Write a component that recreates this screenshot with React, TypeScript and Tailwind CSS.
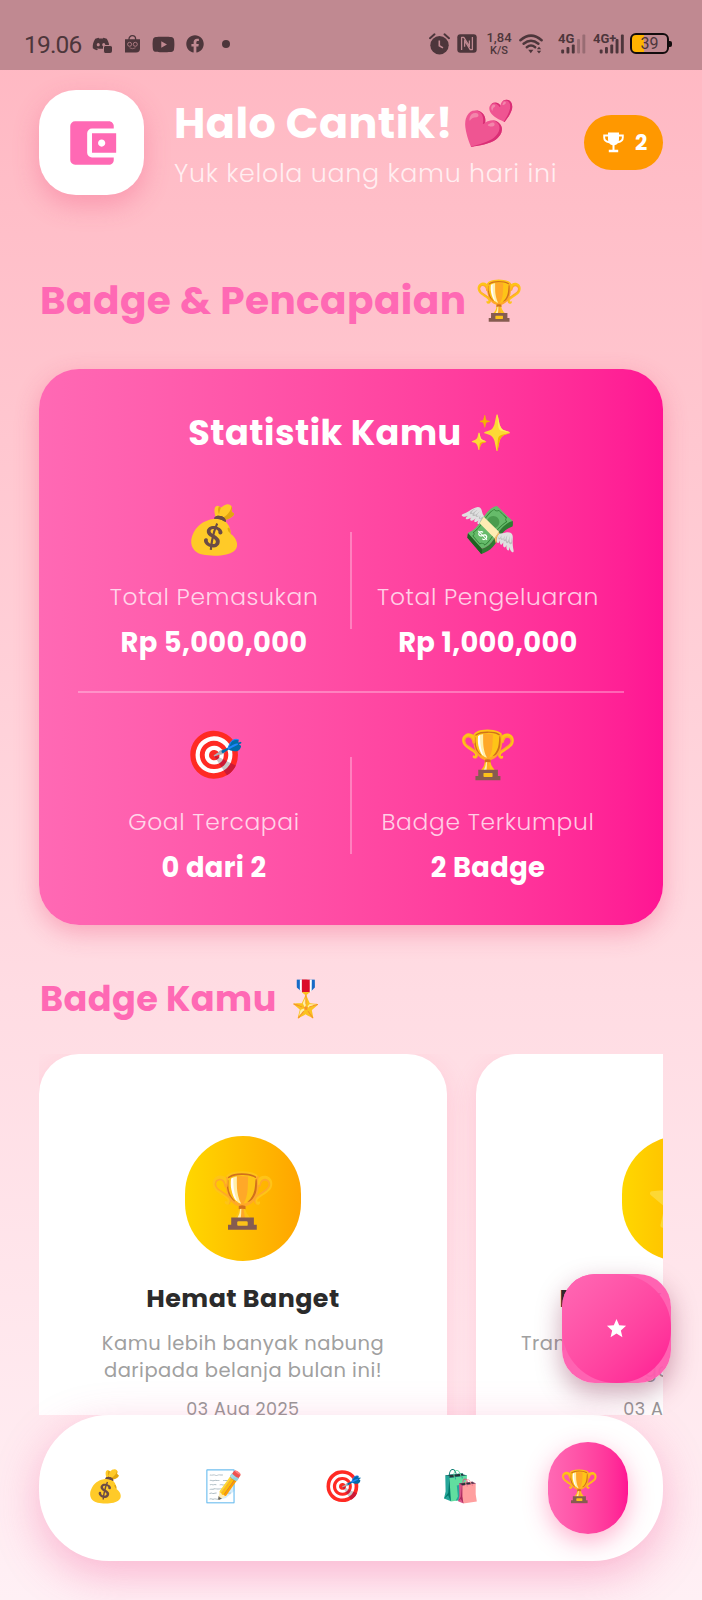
import { FaDiscord, FaFacebook, FaYoutube } from "react-icons/fa";
import { MdAccountBalanceWallet, MdStar } from "react-icons/md";

const INK = "#4d363b";

function ShoppingBagIcon() {
  return (
    <svg width="17" height="18" viewBox="0 0 17 18">
      <path d="M5 5V4a3.3 3.3 0 0 1 6.600 0V5" fill="none" stroke={INK} strokeWidth="1.300" />
      <path d="M1 4.300h15v9.200q0 4-4 4H1z" fill={INK} />
      <circle cx="5.600" cy="9.300" r="2" fill="none" stroke="#c08991" strokeWidth="0.800" />
      <circle cx="11.300" cy="9.300" r="2" fill="none" stroke="#c08991" strokeWidth="0.800" />
      <path d="M5.500 12.800q3 1.800 6 0" fill="none" stroke="#c08991" strokeWidth="0.600" />
    </svg>
  );
}

function DiscordIcon() {
  return (
    <span className="relative block h-[18px] w-[20px]">
      <FaDiscord size={18} color={INK} />
      <span className="absolute right-0 bottom-0 h-[8px] w-[9px] rounded-[2px] border-t border-l border-[#c08991] bg-[#4d363b]" />
    </span>
  );
}

function AlarmIcon() {
  return (
    <svg width="21" height="22" viewBox="0 0 21 22">
      <circle cx="10.500" cy="12.300" r="9.200" fill={INK} />
      <path d="M1 5.200 5.500 1.300M20 5.200 15.500 1.300" stroke={INK} strokeWidth="2" strokeLinecap="round" />
      <path d="M10.300 7.500v5.200l3.700 2.200" fill="none" stroke="#c08991" strokeWidth="1.600" />
    </svg>
  );
}

function NfcIcon() {
  return (
    <svg width="20" height="19" viewBox="0 0 20 19">
      <rect x="0.300" y="0.300" width="19.400" height="18.400" rx="3" fill={INK} />
      <path d="M4.600 16V3.400h2.200l5.600 9V6.500" fill="none" stroke="#c08991" strokeWidth="1.300" strokeLinejoin="round" />
      <path d="M15.400 3v12.600h-2.200L7.600 6.600v6.200" fill="none" stroke="#c08991" strokeWidth="1.300" strokeLinejoin="round" />
    </svg>
  );
}

function WifiIcon() {
  return (
    <svg width="25" height="20" viewBox="0 0 25 20">
      <g fill="none" stroke={INK} strokeWidth="2.500" strokeLinecap="round">
        <path d="M1.400 6.200Q12 -3 22.600 6.200" />
        <path d="M4.600 9.800Q12 3.600 19.400 9.800" />
        <path d="M7.800 13.200Q12 9.800 16.200 13.200" />
      </g>
      <path d="M9.200 15.800h5.200l-2.600 3.400zM17.800 15.300l2.200-2.600 2.200 2.600zM17.800 16.800l2.200 2.600 2.200-2.600z" fill={INK} />
    </svg>
  );
}

function SignalIcon({ label, bars, width, start }: { label: string; bars: number; width: number; start: number }) {
  const tops = [15.5, 13, 10.5, 5, 0.5];
  return (
    <svg width={width} height="24" viewBox={`0 -4 ${width} 24`} className="-mt-[4px] block">
      <text x="0" y="9.300" fontSize="13" fontWeight="700" fontFamily="Roboto, sans-serif" fill={INK}>
        {label}
      </text>
      {tops.map((top, i) => (
        <rect key={top} x={start + i * 5.3} y={top} width="2.900" height={19.5 - top} rx="1" fill={INK} opacity={i < bars ? 1 : 0.35} />
      ))}
    </svg>
  );
}

function StatusBar() {
  return (
    <div className="flex h-[70px] items-start bg-[#c08991] pt-[33px] pl-[24px] font-[Roboto,sans-serif] text-[#4d363b]">
      <div className="flex h-[22px] items-center">
        <span className="w-[67px] pt-[1px] text-[24.5px] leading-[22px] tracking-[-0.8px]">19.06</span>
        <span className="ml-[1px]">
          <DiscordIcon />
        </span>
        <span className="ml-[12px]">
          <ShoppingBagIcon />
        </span>
        <FaYoutube size={23} color={INK} className="ml-[11px]" />
        <FaFacebook size={18} color={INK} className="ml-[11px]" />
        <span className="ml-[18px] size-[8px] rounded-full bg-[#4d363b]" />
      </div>
      <div className="mr-[30px] ml-auto flex h-[21px] items-center">
        <AlarmIcon />
        <span className="ml-[7px]">
          <NfcIcon />
        </span>
        <span className="ml-[7px] flex w-[30px] flex-col items-center font-medium">
          <span className="text-[13px] leading-[14px]">1,84</span>
          <span className="text-[11px] leading-[12px]">K/S</span>
        </span>
        <span className="ml-[5px]">
          <WifiIcon />
        </span>
        <span className="ml-[14px]">
          <SignalIcon label="4G" bars={3} width={28} start={3.2} />
        </span>
        <span className="ml-[7px]">
          <SignalIcon label="4G+" bars={5} width={32} start={6.7} />
        </span>
        <span className="ml-[5px] flex items-center">
          <span className="flex h-[21px] w-[39px] items-center justify-center rounded-[6px] border-2 border-[#120c0d] bg-linear-to-r from-[#ffb400] from-35% to-transparent to-35% text-[16px] leading-none">
            39
          </span>
          <span className="h-[6px] w-[3px] rounded-r-[2px] bg-[#120c0d]" />
        </span>
      </div>
    </div>
  );
}

function TrophyGlyph() {
  return (
    <svg width="21" height="21" viewBox="0 0 21 21" fill="none">
      <path d="M5 0.500h11v6.800q0 4.800-4.500 6v4.400h3.700v2.500H5.800v-2.500h3.700v-4.400Q5 12.100 5 7.300z" fill="#fff" />
      <path d="M5.500 3.500H1.200V5.500q0 4 5 4.700M15.500 3.500h4.300V5.500q0 4-5 4.700" stroke="#fff" strokeWidth="1.900" />
    </svg>
  );
}

function Header() {
  return (
    <header className="flex h-[105px] items-center">
      <div className="flex size-[105px] shrink-0 items-center justify-center rounded-[37px] bg-white shadow-[0_10px_26px_rgba(240,70,120,0.32)]">
        <MdAccountBalanceWallet size={58} color="#ff69b4" />
      </div>
      <div className="ml-[30px] flex-1 pt-[2px] whitespace-nowrap">
        <h1 className="text-[42.9px] leading-[56px] font-bold tracking-[0.45px] text-white">Halo Cantik! 💕</h1>
        <p className="pt-[3px] pb-[1px] text-[25.35px] leading-[38px] font-light tracking-[0.68px] text-white/75">
          Yuk kelola uang kamu hari ini
        </p>
      </div>
      <div className="flex h-[55px] w-[79px] items-center gap-[11px] rounded-full bg-[#ff9800] pl-[19px]">
        <TrophyGlyph />
        <span className="text-[21.5px] leading-[30px] font-bold text-white">2</span>
      </div>
    </header>
  );
}

function Stat({ emoji, label, value }: { emoji: string; label: string; value: string }) {
  return (
    <div className="flex flex-1 flex-col items-center whitespace-nowrap">
      <span className="pl-[1px] text-[46.8px] leading-[62px]">{emoji}</span>
      <span className="mt-[18px] text-[23.4px] leading-[36px] font-light tracking-[0.64px] text-white/75">{label}</span>
      <span className="mt-[10px] text-[27.3px] leading-[36px] font-bold tracking-[0.4px] text-white">{value}</span>
    </div>
  );
}

function StatsCard() {
  return (
    <section className="mt-[42px] h-[556px] rounded-[40px] bg-linear-to-r from-[#ff69b4] to-[#ff1493] px-[39px] pt-[38px] shadow-[0_8px_24px_rgba(235,60,110,0.32)]">
      <h3 className="text-center text-[35.1px] leading-[52px] font-bold tracking-[0.5px] text-white">Statistik Kamu ✨</h3>
      <div className="mt-[40px] flex items-center">
        <Stat emoji="💰" label="Total Pemasukan" value="Rp 5,000,000" />
        <span className="h-[97px] w-[2px] bg-white/30" />
        <Stat emoji="💸" label="Total Pengeluaran" value="Rp 1,000,000" />
      </div>
      <div className="mt-[30px] h-[2px] bg-white/30" />
      <div className="mt-[31px] flex items-center">
        <Stat emoji="🎯" label="Goal Tercapai" value="0 dari 2" />
        <span className="h-[97px] w-[2px] bg-white/30" />
        <Stat emoji="🏆" label="Badge Terkumpul" value="2 Badge" />
      </div>
    </section>
  );
}

function BadgeCard({ emoji, title, lines, date }: { emoji: string; title: string; lines: string[]; date: string }) {
  return (
    <article className="flex h-[420px] w-[408px] shrink-0 flex-col items-center rounded-[40px] bg-white pt-[82px] whitespace-nowrap shadow-[0_8px_24px_rgba(255,105,150,0.2)]">
      <div className="flex h-[125px] w-[116px] items-center justify-center rounded-[58px] bg-linear-to-r from-[#ffd700] to-[#ffa500] pt-[2px] text-[54px] leading-[76px]">
        {emoji}
      </div>
      <h4 className="mt-[18px] text-[25.35px] leading-[38px] font-bold tracking-[0.45px] text-[#2b2b2b]">{title}</h4>
      <p className="mt-[13px] text-center text-[19.5px] leading-[27.3px] tracking-[0.5px] text-[#a0a0a0]">
        {lines.map((line) => (
          <span key={line} className="block">
            {line}
          </span>
        ))}
      </p>
      <span className="mt-[11px] text-[17.55px] leading-[27px] tracking-[0.5px] text-[#989898]">{date}</span>
    </article>
  );
}

function FloatingButton() {
  return (
    <button className="absolute top-[1274px] left-[562px] size-[109px] rounded-[33px] bg-[#ff5bae]/95 shadow-[0_10px_26px_rgba(120,20,60,0.38)]">
      <span className="flex size-full items-center justify-center rounded-t-[33px] rounded-tr-[54px] rounded-b-[54px] bg-linear-to-br from-[#ff69b4] to-[#ff1493]">
        <MdStar size={23} color="#fff" />
      </span>
    </button>
  );
}

function BottomNav() {
  return (
    <nav className="relative flex h-[146px] items-center rounded-[70px] bg-white pr-[24px] pl-[7px] text-[31.2px] leading-[44px] shadow-[0_14px_44px_rgba(240,70,140,0.34)]">
      {["💰", "📝", "🎯", "🛍️"].map((emoji) => (
        <span key={emoji} className="flex flex-1 justify-center pb-[4px]">
          {emoji}
        </span>
      ))}
      <span className="flex flex-1 justify-center">
        <span className="ml-[17px] flex h-[92px] w-[80px] shrink-0 items-center justify-center rounded-[40px] bg-linear-to-r from-[#ff69b4] to-[#ff1493] pr-[16px] pb-[4px] shadow-[0_8px_24px_rgba(255,40,120,0.35)]">
          🏆
        </span>
      </span>
    </nav>
  );
}

export default function App() {
  return (
    <div className="relative h-[1600px] w-[702px] overflow-hidden bg-linear-to-b from-[#ffb6c1] via-[#ffdce3] via-62% to-[#fff0f5] font-[Poppins,'Noto_Color_Emoji',sans-serif]">
      <StatusBar />
      <main className="px-[39px] pt-[20px]">
        <Header />
        <h2 className="mt-[80px] pl-[1px] text-[39px] leading-[52px] font-bold tracking-[0.42px] text-[#ff69b4]">
          Badge &amp; Pencapaian 🏆
        </h2>
        <StatsCard />
        <h2 className="mt-[48px] pl-[1px] text-[35.1px] leading-[52px] font-bold tracking-[0.4px] text-[#ff69b4]">
          Badge Kamu 🎖️
        </h2>
        <div className="mt-[29px] flex h-[361px] gap-[29px] overflow-hidden">
          <BadgeCard
            emoji="🏆"
            title="Hemat Banget"
            lines={["Kamu lebih banyak nabung", "daripada belanja bulan ini!"]}
            date="03 Aug 2025"
          />
          <BadgeCard
            emoji="⭐"
            title="Banyak Transaksi"
            lines={["Transaksi kamu sudah tercatat", "dengan lancar"]}
            date="03 Aug 2025"
          />
        </div>
        <BottomNav />
      </main>
      <FloatingButton />
    </div>
  );
}
